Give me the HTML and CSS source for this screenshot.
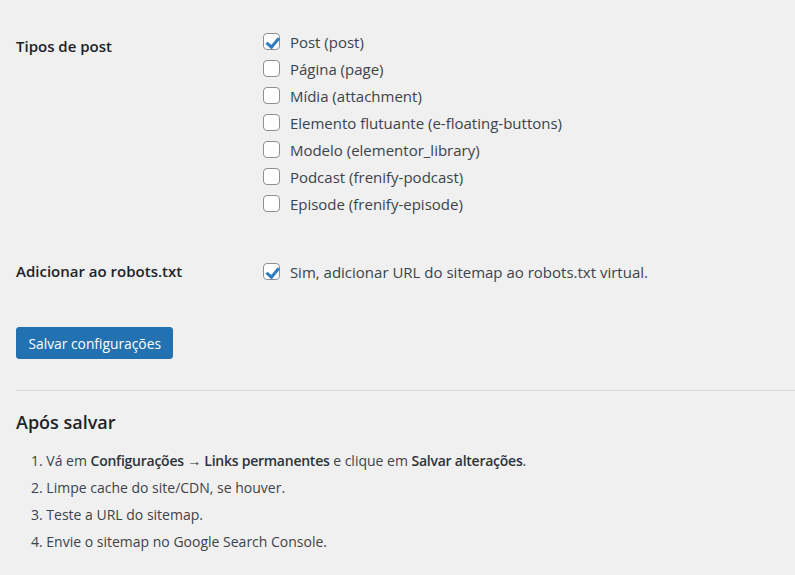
FILE: index.html
```html
<!DOCTYPE html>
<html lang="pt-BR">
<head>
    <meta charset="UTF-8">
    <meta name="viewport" content="width=device-width, initial-scale=1.0">
    <title>Sitemap - Configurações</title>
    <link rel="stylesheet" href="styles.css">
</head>
<body>
    <div class="wrap">
        <div class="form-table">
            <div class="row">
                <div class="th th-offset">Tipos de post</div>
                <div class="td">
                    <label class="option"><input type="checkbox" checked> Post (post)</label>
                    <label class="option"><input type="checkbox"> Página (page)</label>
                    <label class="option"><input type="checkbox"> Mídia (attachment)</label>
                    <label class="option"><input type="checkbox"> Elemento flutuante (e-floating-buttons)</label>
                    <label class="option"><input type="checkbox"> Modelo (elementor_library)</label>
                    <label class="option"><input type="checkbox"> Podcast (frenify-podcast)</label>
                    <label class="option"><input type="checkbox"> Episode (frenify-episode)</label>
                </div>
            </div>
            <div class="row row-robots">
                <div class="th">Adicionar ao robots.txt</div>
                <div class="td">
                    <label class="option"><input type="checkbox" checked> Sim, adicionar URL do sitemap ao robots.txt virtual.</label>
                </div>
            </div>
        </div>

        <div class="submit">
            <button class="button-primary">Salvar configurações</button>
        </div>

        <hr class="divider">

        <h2 class="title">Após salvar</h2>
        <ol class="steps">
            <li>Vá em <strong>Configurações → Links permanentes</strong> e clique em <strong>Salvar alterações</strong>.</li>
            <li>Limpe cache do site/CDN, se houver.</li>
            <li>Teste a URL do sitemap.</li>
            <li>Envie o sitemap no Google Search Console.</li>
        </ol>
    </div>
</body>
</html>
```

FILE: styles.css
```css
body {
    background-color: #f0f0f1;
    color: #3c434a;
    font-family: "Open Sans", "Noto Sans", sans-serif;
    font-size: 15px;
    margin: 0;
}

.wrap {
    padding: 28px 0 0 16px;
}

.row {
    display: flex;
}

.row-robots {
    margin-top: 41px;
}

.th {
    width: 247px;
    flex-shrink: 0;
    color: #1d2327;
    font-weight: 600;
    line-height: 27px;
}

.th-offset {
    padding-top: 5px;
}

.td {
    display: flex;
    flex-direction: column;
}

.option {
    display: flex;
    align-items: center;
    height: 27px;
    white-space: pre;
}

.option input {
    appearance: none;
    -webkit-appearance: none;
    position: relative;
    width: 17px;
    height: 17px;
    margin: 0 6px 0 0;
    border: 1px solid #8c8f94;
    border-radius: 4px;
    background-color: #ffffff;
    flex-shrink: 0;
}

.option input:checked::before {
    content: "";
    position: absolute;
    left: 4.5px;
    top: 0.5px;
    width: 4.5px;
    height: 9.5px;
    border-right: 3px solid #2f7bc0;
    border-bottom: 3px solid #2f7bc0;
    transform: rotate(40deg);
}

.submit {
    margin-top: 42px;
}

.button-primary {
    background-color: #2271b1;
    border: 1px solid #2271b1;
    color: #ffffff;
    border-radius: 3px;
    font-family: inherit;
    font-size: 13.8px;
    height: 32px;
    padding: 0 11.5px;
    cursor: pointer;
}

.divider {
    border: none;
    border-top: 1px solid #dcdcde;
    margin: 31px 0 0 0;
}

.title {
    color: #1d2327;
    font-size: 18px;
    font-weight: 600;
    line-height: 26px;
    margin: 18px 0 0 0;
}

.steps {
    list-style-position: inside;
    padding-left: 15px;
    margin: 12px 0 0 0;
    font-size: 14px;
}

.steps li {
    line-height: 27px;
}

.steps strong {
    font-weight: 600;
    color: #2c3338;
    letter-spacing: -0.25px;
}
```
